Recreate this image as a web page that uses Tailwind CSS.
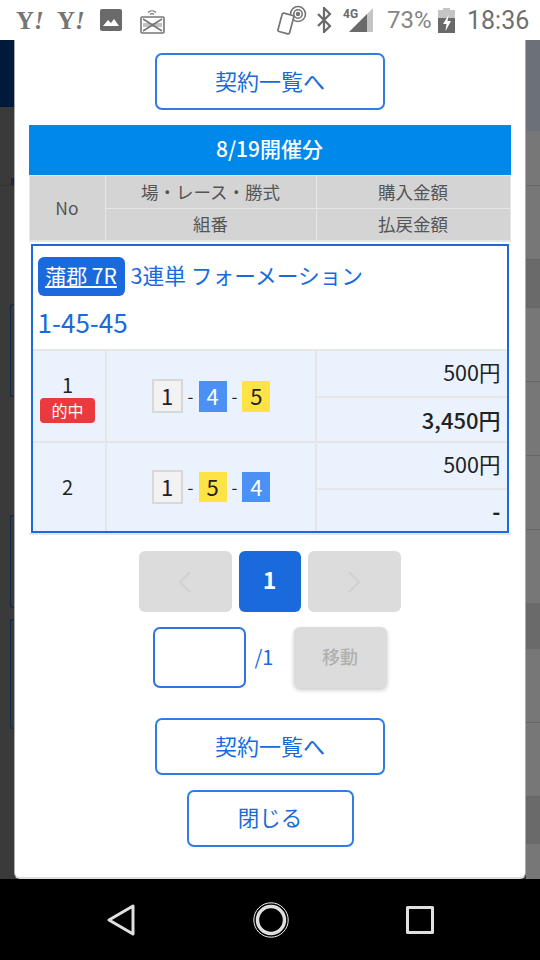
<!DOCTYPE html>
<html lang="ja">
<head>
    <meta charset="UTF-8">
    <meta name="viewport" content="width=device-width, initial-scale=1.0">
    <title>契約一覧</title>
    <script src="https://cdn.jsdelivr.net/npm/@tailwindcss/browser@4"></script>
</head>
<body class="bg-black">
    <div class="relative w-[540px] h-[960px] overflow-hidden flex flex-col font-['Noto_Sans_CJK_JP','Noto_Sans',sans-serif]">

        <!-- Status bar -->
        <div class="h-[40px] bg-white flex items-center text-[#757575] shrink-0">
            <span class="ml-[16px] w-[29px] font-['Liberation_Serif',serif] font-bold text-[25px] leading-none">Y<i>!</i></span>
            <span class="ml-[12px] w-[29px] font-['Liberation_Serif',serif] font-bold text-[25px] leading-none">Y<i>!</i></span>
            <svg class="ml-[14px]" width="22" height="22" viewBox="0 0 22 22"><rect width="22" height="22" rx="2" fill="#6a6a6a"/><path d="M3 17l5-6 3 3 3-4 5 7z" fill="#fff"/></svg>
            <svg class="ml-[18px] mt-[1px]" width="25" height="27" viewBox="0 0 25 27" fill="none" stroke="#757575"><path d="M8 5.5a6 6 0 0 1 8 0M10 7.5a3 3 0 0 1 4 0" stroke-width="1.2"/><rect x="1" y="10" width="23" height="16" rx="1" stroke-width="1.6"/><path d="M3 12l19 12M22 12L3 24" stroke-width="1.5"/><path d="M3 16h19v4H3z" fill="#757575" stroke="none" opacity=".45"/></svg>
            <svg class="ml-[112px]" width="30" height="30" viewBox="0 0 30 30" fill="none" stroke="#757575" stroke-width="1.6"><circle cx="21" cy="9" r="7.5"/><circle cx="21" cy="9" r="4.2"/><circle cx="21" cy="9" r="1.4" fill="#757575"/><rect x="3" y="9" width="12" height="19" rx="1.5" transform="rotate(15 9 18)" fill="#fff" stroke-width="1.7"/></svg>
            <svg class="ml-[9px]" width="16" height="26" viewBox="0 0 16 26" fill="none" stroke="#6a6a6a" stroke-width="2.2"><path d="M2 7l12 12-6 6V1l6 6L2 19"/></svg>
            <div class="relative ml-[11px] w-[30px] h-[28px]">
                <span class="absolute left-0 top-[2px] font-['Roboto',sans-serif] text-[12px] font-bold leading-[13px] text-[#6a6a6a]">4G</span>
                <svg class="absolute left-0 top-0" width="30" height="28" viewBox="0 0 30 28"><path d="M24 8l6-6v24h-6z" fill="#c4c4c4"/><path d="M6 26L24 8v18z" fill="#6a6a6a"/></svg>
            </div>
            <span class="ml-[14px] w-[44px] font-['Roboto',sans-serif] text-[24px] leading-none text-[#858585]">73%</span>
            <svg class="ml-[7px]" width="17" height="25" viewBox="0 0 17 25"><path d="M5 0h7v2h5v23H0V2h5z" fill="#c4c4c4"/><path d="M0 10h17v15H0z" fill="#6a6a6a"/><path d="M10.5 7L5 16h3.5l-1 7L13 13H9.5z" fill="#fff"/></svg>
            <span class="ml-[12px] font-['Roboto',sans-serif] text-[25px] leading-none text-[#6f6f6f]">18:36</span>
        </div>

        <!-- Page dimmed behind the dialog -->
        <div class="flex-1 flex justify-between bg-[#3a3a3a]">
            <div class="w-[14px] flex flex-col">
                <div class="h-[67px] bg-[#001a3a]"></div>
                <div class="h-[79px] border-b border-[#333] flex items-end justify-end">
                    <div class="h-[7px] w-[3px] bg-[#10294d]"></div>
                </div>
                <div class="h-[93px] w-[4px] ml-auto mt-[118px] border-l border-y border-[#12294d] rounded-l-[3px]"></div>
                <div class="h-[93px] w-[4px] ml-auto mt-[118px] border-l border-y border-[#12294d] rounded-l-[3px]"></div>
                <div class="h-[110px] w-[4px] ml-auto mt-[11px] border-l border-y border-[#12294d] rounded-l-[3px]"></div>
            </div>
            <div class="w-[14px] flex flex-col bg-[#777]">
                <div class="h-[91px] bg-[#6c7078]"></div>
                <div class="h-[55px] border-b border-[#666]"></div>
                <div class="h-[74px] border-b border-[#666]"></div>
                <div class="h-[47px] bg-[#6a6a6a]"></div>
                <div class="h-[74px] border-t border-[#666]"></div>
                <div class="h-[74px] border-t border-[#666]"></div>
                <div class="h-[74px] border-t border-[#666]"></div>
                <div class="h-[74px] border-t border-[#666]"></div>
                <div class="h-[46px] bg-[#6a6a6a]"></div>
                <div class="h-[74px] border-b border-[#666]"></div>
                <div class="h-[74px] border-b border-[#666]"></div>
                <div class="h-[47px] bg-[#6a6a6a]"></div>
            </div>
        </div>

        <!-- Navigation bar -->
        <div class="h-[81px] bg-black flex items-center justify-center gap-[117px] shrink-0">
            <svg width="30" height="34" viewBox="0 0 30 34" fill="none" stroke="#e0e0e0" stroke-width="3" stroke-linejoin="round"><path d="M27 3v28L3 17z"/></svg>
            <svg width="36" height="36" viewBox="0 0 36 36" fill="none"><circle cx="18" cy="18" r="17.2" stroke="#f2f2f2" stroke-width="1"/><circle cx="18" cy="18" r="13.5" stroke="#e0e0e0" stroke-width="3.4"/></svg>
            <svg width="28" height="28" viewBox="0 0 28 28" fill="none" stroke="#e0e0e0" stroke-width="3" stroke-linejoin="round"><rect x="1.5" y="1.5" width="25" height="25"/></svg>
        </div>

        <!-- Dialog -->
        <div class="absolute left-[14px] top-[40px] w-[512px] h-[839px] bg-white rounded-b-[6px] border-x border-b-2 border-x-[#aaa] border-b-[#ddd] flex flex-col items-center text-[#176bdc]">
            <a class="mt-[13px] w-[230px] h-[57px] shrink-0 rounded-[7px] border-2 border-[#2f7ce4] pb-[3px] flex items-center justify-center text-[22px]">契約一覧へ</a>

            <!-- Table -->
            <div class="mt-[15px] w-[482px] ml-[-1px] text-[#555]">
                <div class="h-[50px] bg-[#0088ea] text-white text-[21px] font-medium pb-[2px] flex items-center justify-center">8/19開催分</div>
                <div class="grid grid-cols-[76px_211px_195px] grid-rows-[33px_33px] bg-[#e6e6e6] border-b border-[#e6e6e6] text-[17.5px] text-center">
                    <div class="row-span-2 mt-[1px] ml-[1px] mb-[1px] bg-[#d4d4d4] flex items-center justify-center">No</div>
                    <div class="mt-[1px] ml-[1px] bg-[#d4d4d4] flex items-center justify-center">場・レース・勝式</div>
                    <div class="mt-[1px] mx-[1px] bg-[#d4d4d4] flex items-center justify-center">購入金額</div>
                    <div class="mt-[1px] ml-[1px] mb-[1px] bg-[#d4d4d4] flex items-center justify-center">組番</div>
                    <div class="mt-[1px] mx-[1px] mb-[1px] bg-[#d4d4d4] flex items-center justify-center">払戻金額</div>
                </div>
                <div class="mx-[2px] mt-[2px] border-2 border-[#1a69dd] bg-[#eaf2fd] text-[#222]">
                    <div class="h-[105px] bg-white border-b-2 border-[#e6e6e6] pl-[5px] pt-[11px] text-[#176bdc] text-[21.7px]">
                        <div class="h-[39px] flex items-center">
                            <span class="h-[39px] w-[87px] rounded-[6px] bg-[#1a69dd] text-white underline text-[21px] pb-[2px] flex items-center justify-center">蒲郡 7R</span>
                            <span class="ml-[6px] pb-[3px]">3連単 フォーメーション</span>
                        </div>
                        <div class="mt-[8px] text-[26px] leading-[36px]">1-45-45</div>
                    </div>

                    <div class="grid grid-cols-[74px_210px_1fr] h-[92px] border-b-2 border-[#e6e6e6]">
                        <div class="border-r-2 border-[#e6e6e6] pr-[2px] flex flex-col items-center justify-center pt-[2px]">
                            <span class="text-[20px] leading-[26px]">1</span>
                            <span class="w-[55px] h-[25px] rounded-[4px] bg-[#ea3a3d] text-white text-[16px] leading-[24px] text-center">的中</span>
                        </div>
                        <div class="border-r-2 border-[#e6e6e6] pl-[1px] flex items-center justify-center gap-[5px] text-[22px]">
                            <span class="w-[31px] h-[34px] bg-[#f2f2f2] border-2 border-[#d8d8d8] pb-[1px] flex items-center justify-center">1</span>
                            <span class="text-[17px]">-</span>
                            <span class="w-[28px] h-[31px] bg-[#4a90f5] text-white pb-[1px] flex items-center justify-center">4</span>
                            <span class="text-[17px]">-</span>
                            <span class="w-[28px] h-[31px] bg-[#fde345] pb-[1px] flex items-center justify-center">5</span>
                        </div>
                        <div class="flex flex-col">
                            <div class="h-[47px] pr-[6px] pb-[2px] border-b-2 border-[#e6e6e6] text-[21.5px] flex items-center justify-end">500円</div>
                            <div class="flex-1 pr-[6px] text-[22px] font-medium flex items-center justify-end">3,450円</div>
                        </div>
                    </div>

                    <div class="grid grid-cols-[74px_210px_1fr] h-[88px]">
                        <div class="border-r-2 border-[#e6e6e6] pr-[2px] flex items-center justify-center text-[20px]">2</div>
                        <div class="border-r-2 border-[#e6e6e6] pl-[1px] flex items-center justify-center gap-[5px] text-[22px]">
                            <span class="w-[31px] h-[34px] bg-[#f2f2f2] border-2 border-[#d8d8d8] pb-[1px] flex items-center justify-center">1</span>
                            <span class="text-[17px]">-</span>
                            <span class="w-[28px] h-[30px] bg-[#fde345] pb-[1px] flex items-center justify-center">5</span>
                            <span class="text-[17px]">-</span>
                            <span class="w-[28px] h-[30px] bg-[#4a90f5] text-white pb-[1px] flex items-center justify-center">4</span>
                        </div>
                        <div class="flex flex-col">
                            <div class="h-[47px] pr-[6px] pb-[3px] border-b-2 border-[#e6e6e6] text-[21.5px] flex items-center justify-end">500円</div>
                            <div class="flex-1 pr-[6px] text-[22px] font-bold flex items-center justify-end">-</div>
                        </div>
                    </div>
                </div>
                <div class="h-[2px] bg-[#e6e6e6]"></div>
            </div>

            <!-- Pager -->
            <div class="mt-[16px] flex gap-[7px] ml-[-1px]">
                <span class="w-[93px] h-[61px] rounded-[6px] bg-[#dcdcdc] flex items-center justify-center">
                    <svg width="14" height="22" viewBox="0 0 14 22" fill="none" stroke="#d0d0d0" stroke-width="2"><path d="M12 1L2 11l10 10"/></svg>
                </span>
                <span class="w-[62px] h-[61px] rounded-[6px] bg-[#1a69dd] text-white text-[23px] font-bold pb-[4px] flex items-center justify-center">1</span>
                <span class="w-[93px] h-[61px] rounded-[6px] bg-[#dcdcdc] flex items-center justify-center">
                    <svg width="14" height="22" viewBox="0 0 14 22" fill="none" stroke="#d0d0d0" stroke-width="2"><path d="M2 1l10 10L2 21"/></svg>
                </span>
            </div>
            <div class="mt-[15px] flex items-center ml-[-1px]">
                <input class="w-[93px] h-[61px] rounded-[7px] border-2 border-[#2f74de] bg-white" type="text">
                <span class="ml-[9px] w-[39px] text-[20px] pb-[2px]">/1</span>
                <span class="w-[93px] h-[61px] rounded-[6px] bg-[#dcdcdc] shadow-[0_2px_4px_rgba(0,0,0,0.22)] text-[#b0b0b0] text-[18px] font-medium pb-[2px] flex items-center justify-center">移動</span>
            </div>

            <a class="mt-[30px] w-[230px] h-[57px] shrink-0 rounded-[7px] border-2 border-[#2f7ce4] pb-[3px] flex items-center justify-center text-[22px]">契約一覧へ</a>
            <a class="mt-[15px] w-[167px] h-[57px] shrink-0 rounded-[7px] border-2 border-[#2f7ce4] pb-[3px] flex items-center justify-center text-[21.5px]">閉じる</a>
        </div>
    </div>
</body>
</html>
